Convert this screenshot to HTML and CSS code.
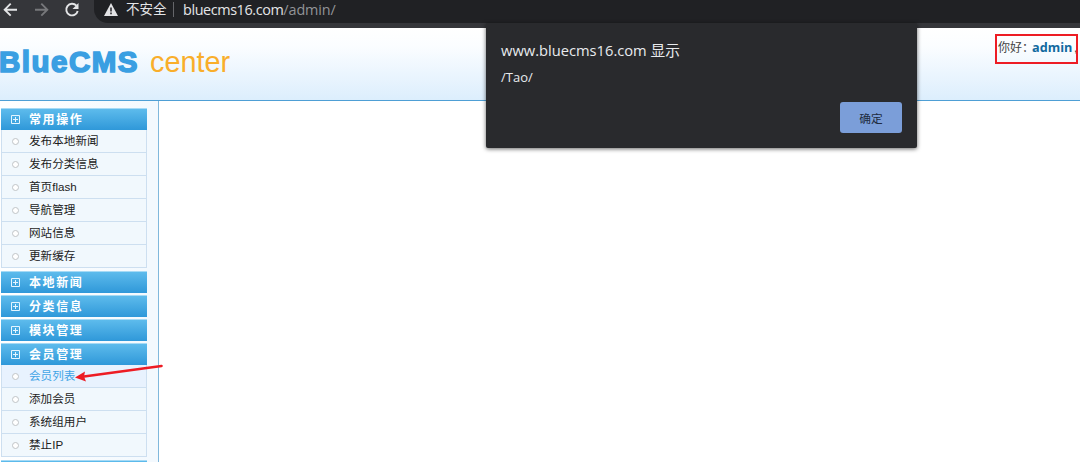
FILE: index.html
```html
<!DOCTYPE html>
<html lang="zh-CN">
<head>
<meta charset="utf-8">
<title>BlueCMS center</title>
<link rel="stylesheet" href="styles.css">
</head>
<body>
<svg width="0" height="0" class="defs">
  <symbol id="plus" viewBox="0 0 10 10"><path d="M.5.5h8v8h-8zM4.500 2v5M2 4.500h5" fill="none" stroke="#e4f5ff"/></symbol>
</svg>
<div class="browser">
  <svg class="nav" width="84" height="23" viewBox="0 0 84 23" fill="none" stroke-width="1.9">
    <path d="M17 9.700H5M10.700 3.700l-6 6 6 6" stroke="#e4e5e7"/>
    <path d="M35 9.700h12M41.300 3.700l6 6-6 6" stroke="#77787b"/>
    <path d="M76.400 5.700A5.800 5.800 0 1 0 77.700 11" stroke="#e4e5e7"/>
    <path d="M78.500 3v6h-6z" fill="#e4e5e7"/>
  </svg>
  <div class="omnibox">
    <svg width="14" height="13" viewBox="0 0 14 13"><path d="M7 0l7 13H0z" fill="#e2e3e5"/><path d="M7 4.400v4M7 9.600v1.600" stroke="#202124" stroke-width="1.5"/></svg>
    <span class="insecure">不安全</span><i class="sep"></i>
    <span class="url">bluecms16.com<span class="path">/admin/</span></span>
  </div>
</div>
<header class="header">
  <div class="logo"><b>BlueCMS</b><span>center</span></div>
  <div class="hello"><span>你好：</span><b>admin</b><span class="comma">,</span></div>
</header>
<div class="main">
  <nav class="side">
    <section>
      <h3><svg width="10" height="10"><use href="#plus"/></svg>常用操作</h3>
      <ul><li>发布本地新闻</li><li>发布分类信息</li><li>首页flash</li><li>导航管理</li><li>网站信息</li><li>更新缓存</li></ul>
    </section>
    <section><h3><svg width="10" height="10"><use href="#plus"/></svg>本地新闻</h3></section>
    <section><h3><svg width="10" height="10"><use href="#plus"/></svg>分类信息</h3></section>
    <section><h3><svg width="10" height="10"><use href="#plus"/></svg>模块管理</h3></section>
    <section>
      <h3><svg width="10" height="10"><use href="#plus"/></svg>会员管理</h3>
      <ul><li class="active">会员列表</li><li>添加会员</li><li>系统组用户</li><li>禁止IP</li></ul>
    </section>
    <section><h3></h3></section>
  </nav>
</div>
<div class="dialog">
  <div class="title">www.bluecms16.com 显示</div>
  <div class="message">/Tao/</div>
  <button class="ok">确定</button>
</div>
<div class="frame"></div>
<svg class="arrow" width="90" height="24" viewBox="0 0 90 24"><path d="M86.500 5L9 15.500" stroke="#ed1c24" stroke-width="2.600" stroke-linecap="round"/><path d="M0 16.500L10 10.500 9 15.500 11 20.500z" fill="#ed1c24"/></svg>
</body>
</html>
```
FILE: styles.css
```css
* { box-sizing: border-box; }
body {
  margin: 0;
  width: 1080px;
  height: 462px;
  overflow: hidden;
  position: relative;
  background: #fff;
  font: 12px "Liberation Sans", "Noto Sans CJK SC", sans-serif;
  color: #1c1c1c;
}
.defs { position: absolute; }
.browser { display: flex; height: 28px; background: #35363a; }
.nav { flex: none; margin-right: 10px; }
.omnibox {
  flex: 1;
  height: 23px;
  display: flex;
  align-items: center;
  padding: 0 0 4px 10px;
  background: #202124;
  border-bottom-left-radius: 14px;
  color: #e4e5e7;
  white-space: nowrap;
}
.insecure { margin-left: 8px; width: 41px; font-size: 13.5px; line-height: 18px; }
.sep { width: 1px; height: 15px; margin: 0 9px 0 6px; background: #65666a; }
.url { font: 14.4px/18px "Open Sans", "Noto Sans", sans-serif; letter-spacing: -.4px; }
.path { color: #929497; letter-spacing: -.1px; }

.header {
  height: 73px;
  display: flex;
  justify-content: space-between;
  background: linear-gradient(#fff 0, #fbfdff 25%, #dceefd 100%);
  border-bottom: 1px solid #4e9fd5;
}
.logo { display: flex; align-items: baseline; height: 40px; padding-top: 17px; line-height: 34px; white-space: nowrap; }
.logo b { font-size: 29.5px; color: #3a9fe2; letter-spacing: 1.5px; -webkit-text-stroke: 1.6px #3a9fe2; width: 151px; margin-left: -1px; }
.logo span { font-size: 28.8px; color: #f9ae2b; }
.hello { display: flex; width: 82px; padding-top: 11px; line-height: 18px; white-space: nowrap; color: #444; }
.hello span { width: 34px; }
.hello b { font: bold 12.7px/17px "Open Sans", "Noto Sans", sans-serif; color: #126a9f; width: 42px; }
.hello .comma { width: 4px; }

.main { display: flex; height: 361px; }
.side {
  width: 159px;
  padding: 7px 11px 0 1px;
  background: linear-gradient(90deg, #fff, #f3f9fe 95%);
  border-right: 1px solid #80b8dc;
}
.side section { width: 146px; margin-bottom: 2px; }
.side h3 {
  margin: 0;
  height: 22px;
  display: flex;
  align-items: center;
  padding-left: 10px;
  background: linear-gradient(#5dbbec, #2f98d9);
  border-top: 1px solid #a6daf5;
  color: #fff;
  font-size: 12px;
  letter-spacing: 1.6px;
  line-height: 20px;
}
.side h3 svg { margin: 1px 8px 0 0; }
.side ul { list-style: none; margin: 0; padding: 0 0 1px; }
.side li {
  height: 23px;
  display: flex;
  align-items: center;
  padding-left: 9px;
  line-height: 20px;
  font-size: 11.6px;
  background: #f1f8fd;
  border: 1px solid #cddff0;
  border-top: 0;
}
.side li::before { content: ""; flex: none; box-sizing: border-box; width: 7px; height: 7px; margin: 1px 10px 0 1px; border: 1.5px solid #c0c4c7; border-radius: 50%; background: #fff; }
.side li.active { color: #41a4e6; background: #e8f2fe; }

.dialog {
  position: absolute;
  left: 486px;
  top: 23px;
  width: 431px;
  height: 125px;
  padding: 16px 15px 15px;
  display: flex;
  flex-direction: column;
  background: #292a2d;
  border-radius: 0 0 2px 2px;
  box-shadow: 0 1px 4px rgba(0, 0, 0, .6);
  color: #e8eaed;
  font-family: "Open Sans", "Noto Sans CJK SC", sans-serif;
}
.title { font-size: 14.7px; line-height: 22px; }
.message { margin-top: 6px; font-size: 13px; line-height: 20px; }
.ok {
  align-self: flex-end;
  width: 62px;
  height: 31px;
  margin-top: 15px;
  padding: 0 0 1px;
  border: 0;
  border-radius: 3px;
  background: #7b9ed9;
  color: #202b40;
  font: 11.7px "Noto Sans CJK SC", sans-serif;
}
.frame { position: absolute; left: 995px; top: 34px; width: 83px; height: 30px; border: 2px solid #ed1c24; }
.arrow { position: absolute; left: 75px; top: 361px; }
```
